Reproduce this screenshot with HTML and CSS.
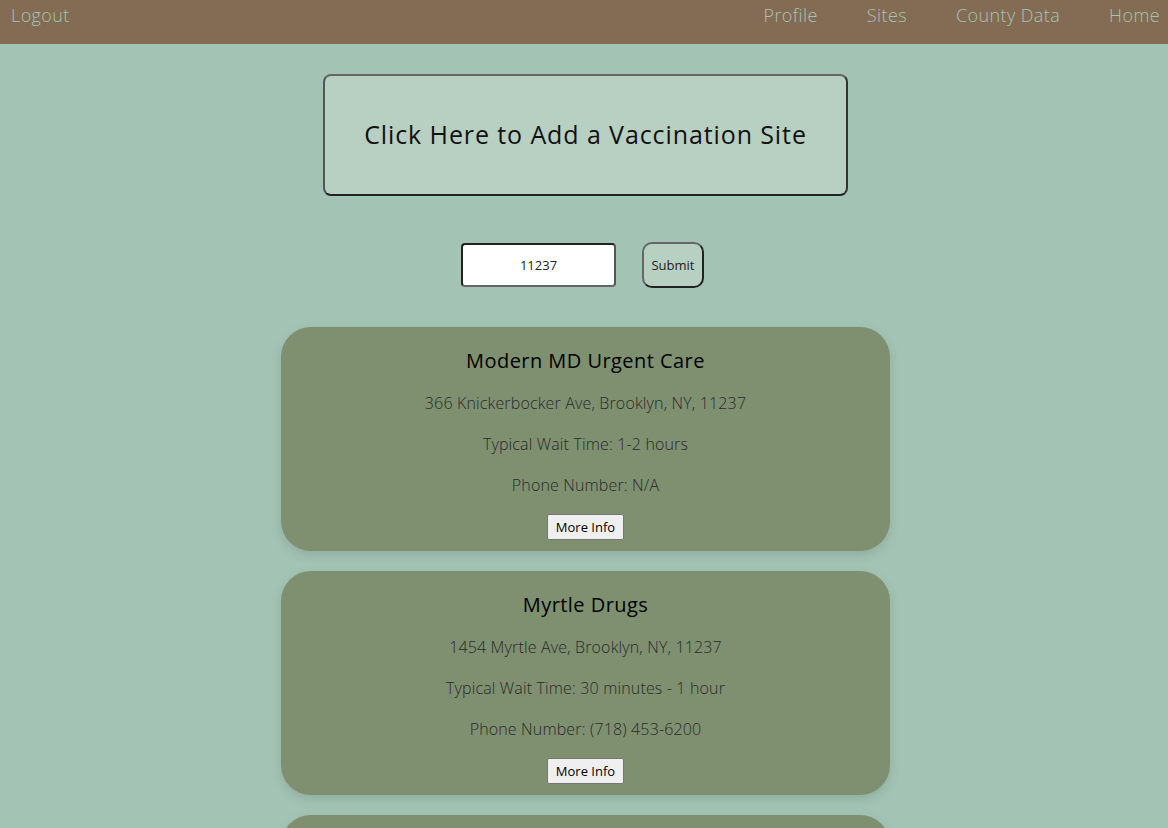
FILE: index.html
```html
<!DOCTYPE html>
<html>
<head>
<meta charset="utf-8">
<link rel="stylesheet" href="styles.css">
</head>
<body>
<header class="topbar">
  <a class="nav-link" href="#">Logout</a>
  <nav class="nav-right">
    <a class="nav-link" href="#">Profile</a>
    <a class="nav-link" href="#">Sites</a>
    <a class="nav-link" href="#">County Data</a>
    <a class="nav-link" href="#">Home</a>
  </nav>
</header>
<main class="main">
  <button class="add-site">Click Here to Add a Vaccination Site</button>
  <form class="search">
    <input class="zip" type="text" value="11237">
    <button class="submit" type="button">Submit</button>
  </form>
  <section class="cards">
    <div class="card">
      <h2 class="card-title">Modern MD Urgent Care</h2>
      <p class="card-line">366 Knickerbocker Ave, Brooklyn, NY, 11237</p>
      <p class="card-line">Typical Wait Time: 1-2 hours</p>
      <p class="card-line">Phone Number: N/A</p>
      <button class="more">More Info</button>
    </div>
    <div class="card">
      <h2 class="card-title">Myrtle Drugs</h2>
      <p class="card-line">1454 Myrtle Ave, Brooklyn, NY, 11237</p>
      <p class="card-line">Typical Wait Time: 30 minutes - 1 hour</p>
      <p class="card-line">Phone Number: (718) 453-6200</p>
      <button class="more">More Info</button>
    </div>
    <div class="card">
      <h2 class="card-title">Brooklyn Pharmacy</h2>
      <p class="card-line">1000 Broadway, Brooklyn, NY, 11237</p>
      <p class="card-line">Typical Wait Time: N/A</p>
      <p class="card-line">Phone Number: N/A</p>
      <button class="more">More Info</button>
    </div>
  </section>
</main>
</body>
</html>
```

FILE: styles.css
```css
html, body {
  margin: 0;
  padding: 0;
}
body {
  background: #a3c4b5;
  font-family: "Open Sans", "DejaVu Sans", sans-serif;
  overflow: hidden;
  height: 828px;
}
.topbar {
  height: 44px;
  background: #846c54;
  display: flex;
  justify-content: space-between;
  align-items: flex-start;
  padding: 0 8px 0 11px;
}
.nav-right {
  display: flex;
  gap: 49px;
}
.nav-link {
  color: #a3c4b5;
  text-decoration: none;
  font-size: 18px;
  font-weight: 300;
  line-height: 30px;
  letter-spacing: 0.4px;
}
.main {
  display: flex;
  flex-direction: column;
  align-items: center;
  padding: 30px 0 0 3px;
}
.add-site {
  width: 525px;
  height: 122px;
  background: #b8d0c2;
  border: 2px solid;
  border-color: #666 #333 #222 #555;
  border-radius: 8px;
  font-family: inherit;
  font-size: 25px;
  font-weight: 400;
  letter-spacing: 0.9px;
  color: #111;
  padding: 0 0 2px 0;
}
.search {
  display: flex;
  align-items: center;
  gap: 26px;
  margin: 46px 6px 0 0;
  height: 46px;
}
.zip {
  width: 155px;
  height: 44px;
  box-sizing: border-box;
  border: 2px solid;
  border-color: #222 #555 #666 #222;
  border-radius: 4px;
  background: #fff;
  text-align: center;
  font-family: inherit;
  font-size: 13px;
  color: #222;
}
.submit {
  width: 62px;
  height: 46px;
  box-sizing: border-box;
  background: #b8d0c2;
  border: 2px solid;
  border-color: #666 #222 #222 #666;
  border-radius: 10px;
  font-family: inherit;
  font-size: 13px;
  color: #222;
  padding: 0;
}
.cards {
  display: flex;
  flex-direction: column;
  gap: 20px;
  margin-top: 39px;
}
.card {
  width: 609px;
  height: 224px;
  box-sizing: border-box;
  background: #7e9070;
  border-radius: 30px;
  box-shadow: 0 4px 12px rgba(0,0,0,0.12);
  display: flex;
  flex-direction: column;
  align-items: center;
  padding-top: 20px;
}
.card-title {
  margin: 0;
  font-size: 20px;
  font-weight: 500;
  letter-spacing: 0.45px;
  color: #000;
  line-height: 28px;
}
.card-line {
  margin: 15px 0 0 0;
  font-size: 16px;
  font-weight: 300;
  letter-spacing: 0.15px;
  color: #2a2a2a;
  line-height: 26px;
}
.more {
  margin-top: 16px;
  height: 26px;
  padding: 0 8px;
  background: #efefef;
  border: 1px solid #767676;
  border-radius: 2px;
  font-family: inherit;
  font-size: 13px;
  color: #000;
}
```
